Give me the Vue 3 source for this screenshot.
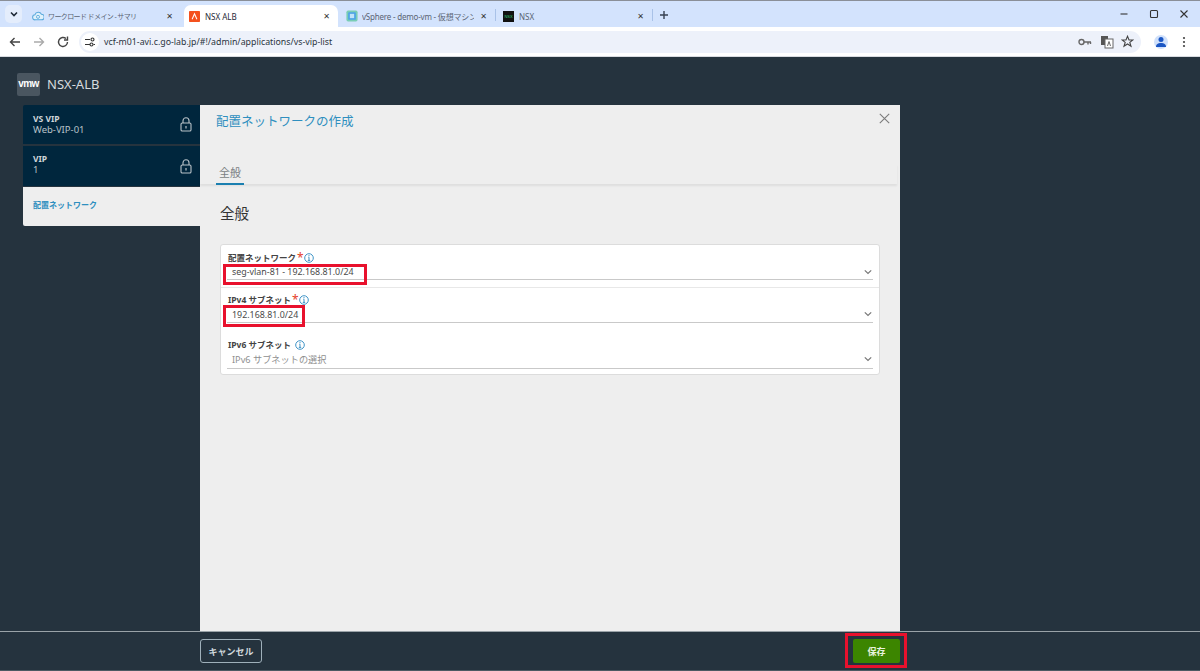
<template>
  <div class="page">
    <div class="tabstrip">
      <div class="tabmenu">
        <svg width="10" height="10" viewBox="0 0 10 10"><path d="M2 3.500 5 6.500 8 3.500" fill="none" stroke="#1f2937" stroke-width="1.600"/></svg>
      </div>
      <div class="tab t1">
        <svg class="fav" width="12" height="12" viewBox="0 0 14 14"><path d="M4 11.500a3 3 0 0 1-.5-6 4 4 0 0 1 7.500-.5 3.200 3.200 0 0 1 0 6.500z" fill="#dff1fb" stroke="#5aa9dc" stroke-width="1.200"/><circle cx="7" cy="8" r="1.800" fill="none" stroke="#5aa9dc"/></svg>
        <span class="tabtext kana">ワークロード ドメイン - サマリ</span>
        <span class="tabx">✕</span>
      </div>
      <div class="tab active">
        <svg class="fav" width="11" height="11" viewBox="0 0 16 16"><rect width="16" height="16" rx="1" fill="#f4511e"/><path d="M4.500 12 8 4l3.500 8" fill="none" stroke="#fff" stroke-width="1.500"/></svg>
        <span class="tabtext dark">NSX ALB</span>
        <span class="tabx">✕</span>
      </div>
      <div class="tab t3">
        <svg class="fav" width="12" height="12" viewBox="0 0 14 14"><rect x=".5" y=".5" width="13" height="13" rx="2" fill="#79cdb5"/><rect x="2.500" y="2.500" width="9" height="9" rx="1" fill="#4da3e8"/><rect x="4.500" y="4.500" width="5" height="5" fill="#bfe3f8"/></svg>
        <span class="tabtext jp">vSphere - demo-vm - 仮想マシン</span>
        <span class="tabx">✕</span>
      </div>
      <i class="sep"></i>
      <div class="tab t4">
        <span class="nsxfav">NSX</span>
        <span class="tabtext">NSX</span>
        <span class="tabx">✕</span>
      </div>
      <i class="sep"></i>
      <svg class="plus" width="10" height="10" viewBox="0 0 10 10"><path d="M5 1v8M1 5h8" stroke="#374151" stroke-width="1.400"/></svg>
      <div class="winctl">
        <svg width="10" height="10" viewBox="0 0 10 10"><path d="M1.500 5h7" stroke="#333" stroke-width="1.100"/></svg>
        <svg width="10" height="10" viewBox="0 0 10 10"><rect x="1.500" y="1.500" width="7" height="7" rx="1" fill="none" stroke="#333" stroke-width="1.100"/></svg>
        <svg width="10" height="10" viewBox="0 0 10 10"><path d="M1.500 1.500l7 7M8.500 1.500l-7 7" stroke="#333" stroke-width="1.100"/></svg>
      </div>
    </div>

    <div class="toolbar">
      <svg class="nav" width="14" height="14" viewBox="0 0 14 14"><path d="M12 7H2.500M6.500 3 2.500 7l4 4" fill="none" stroke="#444" stroke-width="1.400"/></svg>
      <svg class="nav" width="14" height="14" viewBox="0 0 14 14"><path d="M2 7h9.500M7.500 3l4 4-4 4" fill="none" stroke="#aaa" stroke-width="1.400"/></svg>
      <svg class="nav" width="14" height="14" viewBox="0 0 14 14"><path d="M11.500 7A4.500 4.500 0 1 1 10 3.600M11.500 1.500V5H8" fill="none" stroke="#444" stroke-width="1.400"/></svg>
      <div class="omnibox">
        <div class="sitebtn">
          <svg width="12" height="12" viewBox="0 0 12 12"><path d="M1 3.500h5M9.500 8.500h1.500M1 8.500h5" stroke="#333" stroke-width="1.100"/><circle cx="8.500" cy="3.500" r="1.500" fill="none" stroke="#333" stroke-width="1.100"/><circle cx="7.500" cy="8.500" r="1.500" fill="none" stroke="#333" stroke-width="1.100"/></svg>
        </div>
        <span class="url">vcf-m01-avi.c.go-lab.jp/#!/admin/applications/vs-vip-list</span>
        <div class="omni-icons">
          <svg width="14" height="10" viewBox="0 0 14 10"><circle cx="3.500" cy="5" r="2.500" fill="none" stroke="#666" stroke-width="1.400"/><path d="M6 5h7M10 5v2.500M12.500 5v2" stroke="#666" stroke-width="1.400" fill="none"/></svg>
          <svg width="14" height="14" viewBox="0 0 14 14"><rect x="1" y="1" width="7" height="9" fill="#555"/><rect x="5" y="4" width="8" height="9" fill="#fff" stroke="#666"/><path d="M7.500 11l1.500-4.500 1.500 4.500" fill="none" stroke="#666"/></svg>
          <svg width="13" height="13" viewBox="0 0 13 13"><path d="M6.500 1.300 8 5h3.900L8.800 7.400 10 11.300 6.500 9 3 11.300 4.200 7.400 1.100 5H5z" fill="none" stroke="#444" stroke-width="1.100"/></svg>
        </div>
      </div>
      <div class="avatar">
        <svg width="12" height="12" viewBox="0 0 12 12"><circle cx="6" cy="3.500" r="2.500" fill="#1a56c4"/><path d="M1 11c0-3 2-4 5-4s5 1 5 4z" fill="#1a56c4"/></svg>
      </div>
      <svg class="kebab" width="4" height="12" viewBox="0 0 4 12"><circle cx="2" cy="2" r="1.100" fill="#444"/><circle cx="2" cy="6" r="1.100" fill="#444"/><circle cx="2" cy="10" r="1.100" fill="#444"/></svg>
    </div>

    <div class="app">
      <header class="appheader">
        <div class="logo">vmw</div>
        <span class="product">NSX-ALB</span>
      </header>
      <div class="workspace">
        <aside class="side">
          <div class="crumb first">
            <div>
              <div class="crumb-label">VS VIP</div>
              <div class="crumb-value">Web-VIP-01</div>
            </div>
            <svg class="lock" width="12" height="15" viewBox="0 0 12 15"><rect x="1" y="6" width="10" height="8" rx="1.300" fill="none" stroke="#b8c2c8" stroke-width="1.100"/><path d="M3 6V3.800a3 3 0 0 1 6 0V6" fill="none" stroke="#b8c2c8" stroke-width="1.100"/><path d="M6 9v2.500" stroke="#b8c2c8" stroke-width="1.200"/></svg>
          </div>
          <div class="crumb second">
            <div>
              <div class="crumb-label">VIP</div>
              <div class="crumb-value">1</div>
            </div>
            <svg class="lock" width="12" height="15" viewBox="0 0 12 15"><rect x="1" y="6" width="10" height="8" rx="1.300" fill="none" stroke="#b8c2c8" stroke-width="1.100"/><path d="M3 6V3.800a3 3 0 0 1 6 0V6" fill="none" stroke="#b8c2c8" stroke-width="1.100"/><path d="M6 9v2.500" stroke="#b8c2c8" stroke-width="1.200"/></svg>
          </div>
          <div class="crumb current">配置ネットワーク</div>
        </aside>

        <main class="modal">
          <div class="modal-head">
            <h1 class="modal-title">配置ネットワークの作成</h1>
            <svg class="close" width="11" height="11" viewBox="0 0 11 11"><path d="M.8.8l9.400 9.400M10.200.8.8 10.200" stroke="#7b7b7b" stroke-width="1.100"/></svg>
          </div>
          <div class="tabs"><span class="formtab">全般</span></div>
          <div class="modal-body">
            <h2 class="section">全般</h2>
            <div class="card">
              <div v-for="f in fields" :key="f.label" class="field" :class="f.cls">
                <div class="flabel">
                  <span>{{ f.label }}</span>
                  <span v-if="f.required" class="star">*</span>
                  <svg class="info" width="10" height="10" viewBox="0 0 10 10"><circle cx="5" cy="5" r="4.300" fill="none" stroke="#3f94c7"/><path d="M5 4.200v3M3.800 7.400h2.400M4.400 4.200H5" stroke="#3f94c7" fill="none"/><circle cx="5" cy="2.700" r=".6" fill="#3f94c7"/></svg>
                </div>
                <div class="select">
                  <span class="value" :class="{ placeholder: f.placeholder }">{{ f.value }}</span>
                  <svg width="8" height="6" viewBox="0 0 8 6"><path d="M.8 1.300 4 4.500l3.200-3.200" fill="none" stroke="#777" stroke-width="1.200"/></svg>
                </div>
              </div>
            </div>
          </div>
        </main>
      </div>
      <footer class="footer">
        <button class="cancel">キャンセル</button>
        <button class="save">保存</button>
      </footer>

      <i class="mark m1"></i>
      <i class="mark m2"></i>
      <i class="mark m3"></i>
    </div>
  </div>
</template>

<script setup>
const fields = [
  { label: '配置ネットワーク', required: true, value: 'seg-vlan-81 - 192.168.81.0/24', cls: 'f1' },
  { label: 'IPv4 サブネット', required: true, value: '192.168.81.0/24', cls: 'f2' },
  { label: 'IPv6 サブネット', required: false, value: 'IPv6 サブネットの選択', placeholder: true, cls: 'f3' },
]
</script>

<style>
html, body { margin: 0; overflow: hidden; }
</style>

<style scoped>
.page {
  width: 1200px;
  height: 671px;
  display: flex;
  flex-direction: column;
  overflow: hidden;
  font-family: "Noto Sans CJK JP", "Noto Sans", sans-serif;
}
.tabstrip {
  height: 26px;
  background: #d3e3fd;
  border-top: 1px solid #8a8f98;
  display: flex;
  align-items: center;
  flex: none;
}
.tabmenu {
  width: 17px;
  height: 18px;
  margin-left: 5px;
  margin-right: 5px;
  background: #e4edfc;
  border-radius: 5px;
  display: flex;
  align-items: center;
  justify-content: center;
}
.tab {
  display: flex;
  align-items: center;
  height: 22px;
  margin-top: 4px;
  box-sizing: border-box;
  flex: none;
}
.t1 { width: 152px; padding-right: 11px; margin-left: 5px; }
.active {
  width: 154px;
  background: #fff;
  border-radius: 7px 7px 0 0;
  padding-left: 5px;
  padding-right: 8px;
}
.t3 { width: 157px; padding-left: 8px; padding-right: 8px; }
.t4 { width: 156px; padding-left: 7px; padding-right: 8px; }
.fav { flex: none; margin-right: 4px; }
.active .fav { margin-right: 5px; }
.tabtext {
  font-family: "Noto Sans", "Noto Sans CJK JP", sans-serif;
  font-size: 8px;
  color: #5a6474;
  flex: 1;
  min-width: 0;
  margin-right: 6px;
  white-space: nowrap;
  overflow: hidden;
}
.tabtext.jp { letter-spacing: -0.2px; }
.tabtext.kana { font-size: 7px; letter-spacing: -0.6px; }
.tabtext.dark { color: #1f2937; }
.tabx { font-size: 8px; color: #333; flex: none; font-family: "DejaVu Sans", sans-serif; font-weight: 700; }
.sep { width: 1px; height: 12px; background: #a9c2e8; margin-top: 2px; flex: none; }
.nsxfav {
  width: 11px;
  height: 11px;
  background: #111;
  color: #2ecc71;
  font-size: 4px;
  line-height: 11px;
  text-align: center;
  margin-right: 5px;
  flex: none;
  font-family: "Liberation Sans", sans-serif;
}
.plus { margin-left: 6px; margin-top: 2px; flex: none; }
.winctl {
  margin-left: auto;
  display: flex;
  gap: 20px;
  padding-right: 11px;
  align-items: center;
}
.toolbar {
  height: 30px;
  background: #fff;
  display: flex;
  align-items: center;
  flex: none;
  box-sizing: border-box;
  border-bottom: 1px solid #d8dbe0;
  padding-left: 8px;
}
.nav { margin-right: 10px; flex: none; }
.omnibox {
  margin-left: -1px;
  width: 1062px;
  height: 22px;
  border-radius: 11px;
  background: #edf1fa;
  display: flex;
  align-items: center;
  padding-left: 2px;
  box-sizing: border-box;
  flex: none;
}
.sitebtn {
  width: 18px;
  height: 18px;
  border-radius: 50%;
  background: #fff;
  display: flex;
  align-items: center;
  justify-content: center;
}
.url {
  margin-left: 5px;
  font-size: 8.800px;
  font-family: "Noto Sans", sans-serif;
  color: #2b3440;
}
.omni-icons {
  margin-left: auto;
  display: flex;
  align-items: center;
  gap: 7.500px;
  padding-right: 7px;
}
.avatar {
  width: 14px;
  height: 14px;
  margin-left: 13px;
  background: #cfe0fb;
  border-radius: 50%;
  display: flex;
  align-items: center;
  justify-content: center;
  flex: none;
}
.kebab { margin-left: 14px; flex: none; }
.app {
  flex: 1;
  background: #25333e;
  position: relative;
  display: flex;
  flex-direction: column;
  min-height: 0;
}
.appheader {
  height: 48px;
  display: flex;
  align-items: center;
  padding-left: 17px;
  flex: none;
  box-sizing: border-box;
  padding-top: 6px;
}
.logo {
  width: 23px;
  height: 23px;
  background: #4a5660;
  border-radius: 2px;
  color: #fff;
  font-family: "Liberation Sans", sans-serif;
  font-weight: 700;
  font-size: 10px;
  line-height: 22px;
  text-align: center;
  letter-spacing: -0.5px;
}
.product {
  margin-left: 7px;
  color: #d6dbde;
  font-size: 13px;
  font-family: "Noto Sans", sans-serif;
}
.workspace {
  flex: 1;
  display: flex;
  padding-left: 23px;
  min-height: 0;
}
.side { width: 177px; flex: none; }
.crumb {
  display: flex;
  justify-content: space-between;
  align-items: center;
  box-sizing: border-box;
  padding: 0 8px 0 10px;
  background: #00263d;
  font-family: "Noto Sans", "Noto Sans CJK JP", sans-serif;
}
.first { height: 39px; margin-bottom: 2px; border-radius: 2px 0 0 0; }
.second { height: 40px; margin-bottom: 1px; padding-bottom: 4px; }
.second .lock { margin-top: 4px; }
.current {
  height: 39px;
  background: #eeeeee;
  color: #2f8fbf;
  font-size: 8px;
  font-weight: 700;
  border-radius: 0 0 0 2px;
  padding-bottom: 4px;
}
.crumb-label { color: #cfd6da; font-size: 8.500px; font-weight: 700; line-height: 11px; }
.crumb-value { color: #b8c2c8; font-size: 9.500px; line-height: 12px; }
.lock { flex: none; }
.modal {
  width: 700px;
  flex: none;
  background: #eeeeee;
  display: flex;
  flex-direction: column;
  font-family: "Noto Sans", "Noto Sans CJK JP", sans-serif;
}
.modal-head {
  height: 59px;
  padding: 8px 10px 0 16px;
  display: flex;
  justify-content: space-between;
  box-sizing: border-box;
  flex: none;
}
.modal-title {
  margin: 0;
  font-weight: 400;
  font-size: 12.500px;
  line-height: 18px;
  color: #2f8fbf;
}
.close { margin-top: 0; }
.tabs {
  height: 20px;
  padding-left: 16px;
  box-shadow: 0 2px 2px rgba(0, 0, 0, 0.07);
  margin-right: 3px;
  flex: none;
  display: flex;
  align-items: flex-end;
}
.formtab {
  display: block;
  width: 28px;
  box-sizing: border-box;
  padding-left: 3px;
  height: 18px;
  line-height: 12px;
  font-size: 11px;
  color: #7a7f83;
  border-bottom: 2px solid #1b7fb0;
  margin-bottom: -1px;
}
.modal-body { padding: 0 20px; }
.section {
  margin: 19px 0 21px;
  font-size: 14.500px;
  font-weight: 400;
  line-height: 20px;
  color: #333;
}
.card {
  width: 660px;
  background: #fff;
  border: 1px solid #dcdcdc;
  border-radius: 3px;
  box-sizing: border-box;
  padding: 0 6px;
}
.field { box-sizing: border-box; }
.f1 { height: 43px; padding: 6px 6px 0; margin: 0 -6px; border-bottom: 1px solid #e8e8e8; }
.f2 { height: 42px; padding-top: 5px; }
.f3 { height: 44px; padding-top: 8px; }
.f1 .select { height: 15px; }
.f3 .select { height: 15px; padding-bottom: 2px; }
.flabel {
  display: flex;
  align-items: center;
  height: 13px;
  padding-left: 1px;
  font-size: 8.500px;
  font-weight: 700;
  color: #444;
  line-height: 13px;
}
.star { color: #e5402a; font-size: 12px; font-weight: 400; margin-left: 1px; line-height: 11px; height: 11px; }
.info { margin-left: 4px; }
.star + .info { margin-left: 0; }
.select {
  height: 16px;
  border-bottom: 1px solid #c9c9c9;
  display: flex;
  justify-content: space-between;
  align-items: center;
  padding: 0 0 0 5px;
}
.value { font-size: 8.900px; color: #4a4a4a; }
.value.placeholder { color: #8f8f8f; font-size: 9.200px; }
.select svg { margin-right: 1px; }
.footer {
  height: 40px;
  flex: none;
  border-top: 1px solid #9aa3a8;
  border-bottom: 1px solid #4c5963;
  box-sizing: border-box;
  display: flex;
  align-items: center;
  padding-left: 200px;
}
.cancel {
  width: 62px;
  height: 24px;
  background: transparent;
  border: 1px solid #9fb0ba;
  border-radius: 3px;
  color: #cfd8dc;
  font-size: 9px;
  font-weight: 700;
  font-family: "Noto Sans CJK JP", sans-serif;
  padding: 0;
}
.save {
  margin-left: 591px;
  width: 47px;
  height: 24px;
  background: #3c8500;
  border: none;
  border-radius: 2px;
  color: #e8f2df;
  font-size: 9px;
  font-weight: 700;
  font-family: "Noto Sans CJK JP", sans-serif;
  padding: 0;
}
.mark {
  position: absolute;
  border: 3px solid #e8112d;
  box-sizing: border-box;
  pointer-events: none;
}
.m1 { left: 223px; top: 207px; width: 144px; height: 21px; }
.m2 { left: 223px; top: 248px; width: 82px; height: 22px; }
.m3 { left: 845px; top: 576px; width: 62px; height: 35px; }
</style>
